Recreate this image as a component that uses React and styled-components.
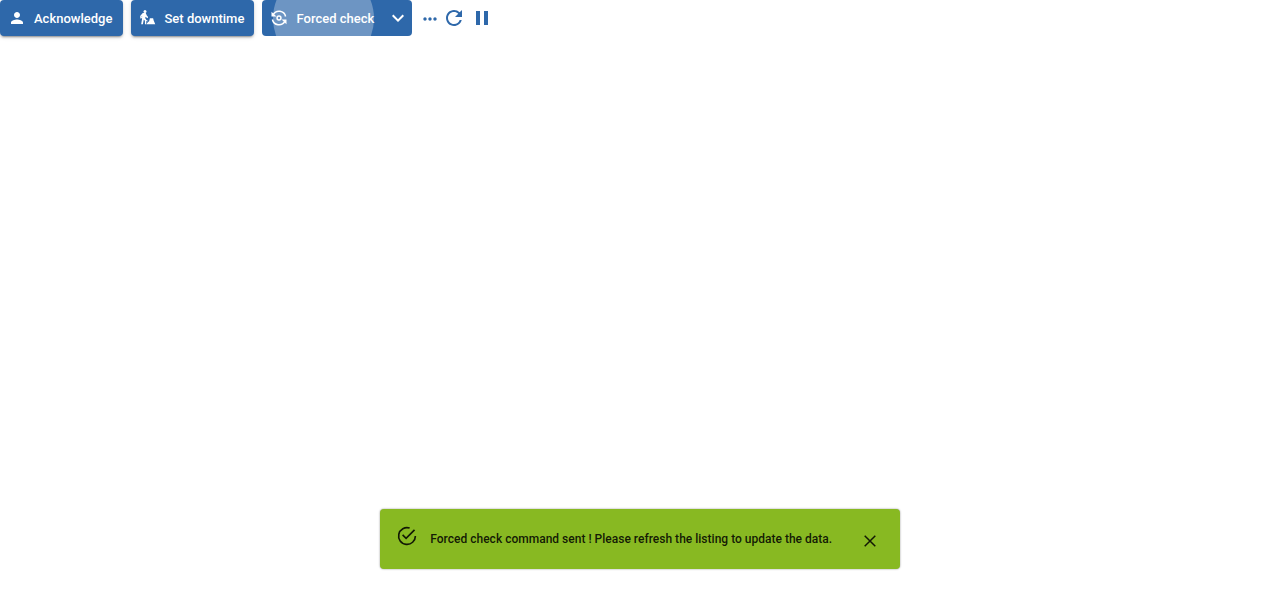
import React from 'react';
import styled, { createGlobalStyle } from 'styled-components';
import {
  MdPerson, MdKeyboardArrowDown, MdMoreHoriz, MdRefresh, MdPause,
} from 'react-icons/md';

const GlobalStyle = createGlobalStyle`
  *, *::before, *::after { box-sizing: border-box; }
  body { margin: 0; background: #fff; font-family: Roboto, sans-serif; -webkit-font-smoothing: antialiased; }
  button { font-family: inherit; border: 0; cursor: pointer; }
  svg { display: block; flex-shrink: 0; }
`;

const Page = styled.main`
  display: flex;
  flex-direction: column;
  justify-content: space-between;
  height: 590px;
  padding-bottom: 21px;
`;

const Toolbar = styled.div`
  display: flex;
  align-items: center;
  height: 36px;
`;

const ActionButton = styled.button`
  position: relative;
  display: flex;
  align-items: center;
  gap: ${({ $iconGap = 8 }) => $iconGap}px;
  width: ${({ $width }) => $width}px;
  height: 36px;
  padding: 0 0 0 ${({ $inset = 8 }) => $inset}px;
  margin-right: ${({ $gap = 8 }) => $gap}px;
  overflow: hidden;
  border-radius: ${({ $radius = '4px' }) => $radius};
  background: #2e68aa;
  color: #fff;
  font-size: 13px;
  font-weight: 500;
  line-height: 24px;
  white-space: nowrap;
  box-shadow: ${({ $flat }) => ($flat
    ? 'none'
    : '0 3px 1px -2px rgba(0,0,0,.2), 0 2px 2px rgba(0,0,0,.14), 0 1px 5px rgba(0,0,0,.12)')};
`;

const Label = styled.span`
  padding-top: 2px;
`;

const Ripple = styled.span`
  position: absolute;
  left: 11px;
  top: -32px;
  width: 101px;
  height: 101px;
  border-radius: 50%;
  background: #fff;
  opacity: 0.3;
  pointer-events: none;
`;

const IconButton = styled.button`
  display: flex;
  align-items: center;
  justify-content: center;
  width: ${({ $width }) => $width}px;
  height: 36px;
  padding: ${({ $drop = 0 }) => $drop}px 0 0;
  background: none;
  color: #2e68aa;
`;

const Snackbar = styled.div`
  display: flex;
  align-items: flex-start;
  align-self: center;
  width: 520px;
  height: 60px;
  padding: 16px 20px 0 16px;
  border-radius: 4px;
  background: #88b922;
  color: rgba(0, 0, 0, 0.87);
  box-shadow: 0 0 2px rgba(0, 0, 0, 0.45);
`;

const Message = styled.p`
  flex: 1;
  margin: 4px 0 0 12px;
  font-size: 12px;
  font-weight: 500;
  line-height: 20px;
  letter-spacing: 0.01px;
  text-indent: 0.3px;
  white-space: nowrap;
`;

const CloseButton = styled.button`
  display: flex;
  padding: 0;
  margin-top: 6px;
  background: none;
  color: inherit;
`;

const DowntimeIcon = () => (
  <svg width="18" height="18" viewBox="0 0 24 24" fill="currentColor">
    <circle cx="8" cy="3.2" r="2" />
    <path d="M5 5.4h4l1.4 3.4 1.8 2-.8 1.4-2.8-1.8-.2 2 1.3 2.4V20.2H7.9v-4.6L6.4 14l-1.2 6.2H2.9L4.1 13V9.2l-.8 1.1v2.5H1.8V9z" />
    <path d="M2 9.6l9.6 6-.6.9L1.5 10.6z" />
    <path d="M9.9 20.2l1.9-2.6 1.7-1.3 1-4h4.3l.9 3.4 2 4.5z" />
  </svg>
);

const ForcedCheckIcon = () => (
  <svg width="18" height="18" viewBox="0 0 24 24" fill="currentColor">
    <g fill="none" stroke="currentColor" strokeWidth="2">
      <circle cx="12" cy="12" r="2.6" />
      <path d="M4.2 7.5A9 9 0 0 1 20.8 10" />
      <path d="M19.8 16.5A9 9 0 0 1 3.2 14" />
    </g>
    <path d="M2 3.6V10h6.6z" />
    <path d="M22 20.4V14h-6.6z" />
  </svg>
);

const SuccessIcon = () => (
  <svg width="22" height="22" viewBox="0 0 24 24" fill="none" stroke="currentColor" strokeWidth="1.8">
    <path d="M14.9 3.35A9.15 9.15 0 1 0 21.15 12" />
    <path d="M7.2 10.8 11 14.6 20.2 5.3" />
  </svg>
);

const CloseIcon = () => (
  <svg width="20" height="20" viewBox="0 0 20 20" fill="none" stroke="currentColor" strokeWidth="1.5">
    <path d="M4.7 4.7l10.6 10.6M15.3 4.7L4.7 15.3" />
  </svg>
);

export default function App() {
  return (
    <>
      <GlobalStyle />
      <Page>
        <Toolbar>
          <ActionButton $width={123}><MdPerson size={18} /><Label>Acknowledge</Label></ActionButton>
          <ActionButton $width={123} $inset={7.5}><DowntimeIcon /><Label>Set downtime</Label></ActionButton>
          <ActionButton $width={122} $gap={0} $radius="4px 0 0 4px" $iconGap={8.5} $flat>
            <ForcedCheckIcon /><Label>Forced check</Label>
            <Ripple />
          </ActionButton>
          <ActionButton $width={28} $inset={2} $radius="0 4px 4px 0" $flat aria-label="Check options">
            <MdKeyboardArrowDown size={24} />
          </ActionButton>
          <IconButton $width={20} $drop={2} aria-label="More actions"><MdMoreHoriz size={20} /></IconButton>
          <IconButton $width={28} aria-label="Refresh"><MdRefresh size={24} /></IconButton>
          <IconButton $width={28} aria-label="Pause"><MdPause size={24} /></IconButton>
        </Toolbar>
        <Snackbar role="alert">
          <SuccessIcon />
          <Message>Forced check command sent ! Please refresh the listing to update the data.</Message>
          <CloseButton aria-label="Close"><CloseIcon /></CloseButton>
        </Snackbar>
      </Page>
    </>
  );
}
